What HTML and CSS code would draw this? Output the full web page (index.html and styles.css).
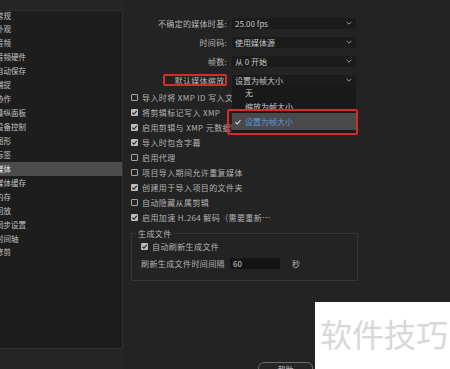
FILE: index.html
```html
<!DOCTYPE html>
<html lang="zh-CN">

<head>
  <meta charset="UTF-8" />
  <title>首选项 - 媒体</title>
  <link rel="stylesheet" href="styles.css">
</head>

<body>
  <div class="window">
    <aside class="sidebar">
      <ul class="nav">
        <li>常规</li>
        <li>外观</li>
        <li>音频</li>
        <li>音频硬件</li>
        <li>自动保存</li>
        <li>捕捉</li>
        <li>协作</li>
        <li>操纵面板</li>
        <li>设备控制</li>
        <li>图形</li>
        <li>标签</li>
        <li class="active">媒体</li>
        <li>媒体缓存</li>
        <li>内存</li>
        <li>回放</li>
        <li>同步设置</li>
        <li>时间轴</li>
        <li>修剪</li>
      </ul>
    </aside>

    <main class="prefs">
      <div class="field">
        <span class="field-label">不确定的媒体时基:</span>
        <div class="select"><span>25.00 fps</span><svg class="chev" viewBox="0 0 6 4"><path d="M0.6 0.8 L3 3.2 L5.4 0.8" /></svg></div>
      </div>
      <div class="field">
        <span class="field-label">时间码:</span>
        <div class="select"><span>使用媒体源</span><svg class="chev" viewBox="0 0 6 4"><path d="M0.6 0.8 L3 3.2 L5.4 0.8" /></svg></div>
      </div>
      <div class="field">
        <span class="field-label">帧数:</span>
        <div class="select"><span>从 0 开始</span><svg class="chev" viewBox="0 0 6 4"><path d="M0.6 0.8 L3 3.2 L5.4 0.8" /></svg></div>
      </div>
      <div class="field">
        <span class="field-label">默认媒体缩放:</span>
        <div class="select"><span>设置为帧大小</span><svg class="chev" viewBox="0 0 6 4"><path d="M0.6 0.8 L3 3.2 L5.4 0.8" /></svg></div>
        <div class="mark mark-label"></div>
        <div class="menu">
          <div class="menu-item">无</div>
          <div class="menu-item">缩放为帧大小</div>
          <div class="menu-item selected">
            <svg class="tick" viewBox="0 0 6 6"><path d="M0.5 3.4 L2.2 5 L5.5 1" /></svg>设置为帧大小
          </div>
          <div class="mark mark-menu"></div>
        </div>
      </div>

      <div class="checks">
        <div class="check"><span class="box"></span>导入时将 XMP ID 写入文件</div>
        <div class="check"><span class="box on"><svg viewBox="0 0 7 7"><path d="M1.3 3.6 L2.9 5.1 L5.8 1.8" /></svg></span>将剪辑标记写入 XMP</div>
        <div class="check"><span class="box on"><svg viewBox="0 0 7 7"><path d="M1.3 3.6 L2.9 5.1 L5.8 1.8" /></svg></span>启用剪辑与 XMP 元数据链接</div>
        <div class="check"><span class="box on"><svg viewBox="0 0 7 7"><path d="M1.3 3.6 L2.9 5.1 L5.8 1.8" /></svg></span>导入时包含字幕</div>
        <div class="check"><span class="box"></span>启用代理</div>
        <div class="check"><span class="box"></span>项目导入期间允许重复媒体</div>
        <div class="check"><span class="box on"><svg viewBox="0 0 7 7"><path d="M1.3 3.6 L2.9 5.1 L5.8 1.8" /></svg></span>创建用于导入项目的文件夹</div>
        <div class="check"><span class="box"></span>自动隐藏从属剪辑</div>
        <div class="check"><span class="box on"><svg viewBox="0 0 7 7"><path d="M1.3 3.6 L2.9 5.1 L5.8 1.8" /></svg></span>启用加速 H.264 解码（需要重新…</div>
      </div>

      <fieldset class="group">
        <legend>生成文件</legend>
        <div class="check"><span class="box on"><svg viewBox="0 0 7 7"><path d="M1.3 3.6 L2.9 5.1 L5.8 1.8" /></svg></span>自动刷新生成文件</div>
        <div class="interval">
          <span>刷新生成文件时间间隔</span>
          <span class="num">60</span>
          <span class="unit">秒</span>
        </div>
      </fieldset>

      <div class="footer">
        <button class="help">帮助</button>
      </div>
    </main>
  </div>

  <div class="watermark">软件技巧</div>
</body>

</html>
```

FILE: styles.css
```css
* {
  box-sizing: border-box;
}

html,
body {
  margin: 0;
  padding: 0;
}

body {
  width: 450px;
  height: 369px;
  overflow: hidden;
  position: relative;
  background: #252525;
  font-family: "Noto Sans CJK SC", "Noto Sans", sans-serif;
  font-size: 8px;
  color: #b6b6b6;
}

.window {
  display: flex;
  align-items: flex-start;
  height: 369px;
}

/* left category list, scrolled slightly to the right */
.sidebar {
  width: 123px;
  height: 339px;
  margin-top: 10px;
  flex-shrink: 0;
  background: #1d1d1d;
  border: 1px solid #2f2f2f;
  border-left: none;
  overflow: hidden;
}

.nav {
  list-style: none;
  margin: -2.5px 0 0;
  padding: 0;
}

.nav li {
  height: 13.95px;
  line-height: 13.95px;
  text-indent: -4px;
  font-size: 7.5px;
  color: #c0c0c0;
  white-space: nowrap;
}

.nav li.active {
  background: #4c4c4c;
  color: #e4e4e4;
}

/* right settings area */
.prefs {
  flex: 1;
  padding: 13.5px 0 0 8px;
  background: #232323;
  height: 369px;
}

.field {
  display: flex;
  align-items: center;
  height: 19px;
  position: relative;
}

.field-label {
  width: 96px;
  text-align: right;
  white-space: nowrap;
  letter-spacing: 0.3px;
  color: #b4b4b4;
}

.select {
  margin-left: 5px;
  width: 124px;
  height: 11px;
  padding: 0 4px 0 3px;
  background: #1b1b1b;
  display: flex;
  align-items: center;
  justify-content: space-between;
  color: #c6c6c6;
  line-height: 11px;
  white-space: nowrap;
}

.chev {
  width: 6px;
  height: 4px;
  fill: none;
  stroke: #9a9a9a;
  stroke-width: 1;
}

.menu {
  position: absolute;
  left: 101px;
  top: 15.5px;
  width: 124px;
  padding-bottom: 4px;
  background: #191919;
  z-index: 2;
}

.menu-item {
  height: 13.5px;
  line-height: 13.5px;
  padding-left: 13px;
  display: flex;
  align-items: center;
  color: #c8c8c8;
  white-space: nowrap;
}

.menu-item.selected {
  height: 17px;
  padding-left: 3px;
  background: #4a4a4a;
  color: #5898dc;
}

.tick {
  width: 6px;
  height: 6px;
  margin-right: 4px;
  fill: none;
  stroke: #e0e0e0;
  stroke-width: 1.1;
}

.mark {
  position: absolute;
  border: 2px solid #d42b2b;
  border-radius: 2px;
  z-index: 3;
}

.mark-label {
  left: 32px;
  top: 3.5px;
  width: 64px;
  height: 12px;
}

.mark-menu {
  left: -5px;
  top: 23px;
  width: 131px;
  height: 26px;
}

.check {
  display: flex;
  align-items: center;
  height: 15.1px;
  white-space: nowrap;
  letter-spacing: 0.4px;
  color: #b2b2b2;
}

.box {
  width: 7px;
  height: 7px;
  margin-right: 4px;
  flex-shrink: 0;
  border: 1px solid #a6a6a6;
  border-radius: 1px;
}

.box.on {
  border: none;
  background: #bdbdbd;
}

.box svg {
  display: block;
  width: 7px;
  height: 7px;
  fill: none;
  stroke: #2b2b2b;
  stroke-width: 1.2;
}

.group {
  margin: 3.6px 0 0;
  padding: 0 0 7px 9px;
  width: 227px;
  min-width: 0;
  border: 1px solid #353535;
}

.group legend {
  margin-left: -5px;
  padding: 0 2px;
  line-height: 10px;
  letter-spacing: 0.4px;
  color: #b4b4b4;
}

.group .check {
  height: 15px;
}

.interval {
  display: flex;
  align-items: center;
  height: 19px;
  letter-spacing: 0.4px;
  white-space: nowrap;
  color: #b2b2b2;
}

.num {
  margin-left: 5px;
  width: 50px;
  height: 11px;
  line-height: 11px;
  padding-left: 3px;
  background: #141414;
  color: #d0d0d0;
  letter-spacing: 0;
}

.unit {
  margin-left: 12px;
}

.footer {
  padding: 81px 0 0 127px;
}

.help {
  width: 55px;
  height: 16px;
  padding: 0;
  border: 1px solid #6c6c6c;
  border-radius: 6px;
  background: #262626;
  color: #c8c8c8;
  font: inherit;
  line-height: 12px;
}

.watermark {
  position: absolute;
  right: 0;
  bottom: 0;
  width: 135px;
  height: 67px;
  padding-left: 5px;
  background: #fff;
  color: #d8d8d8;
  font-size: 32px;
  line-height: 62px;
  white-space: nowrap;
}
```
